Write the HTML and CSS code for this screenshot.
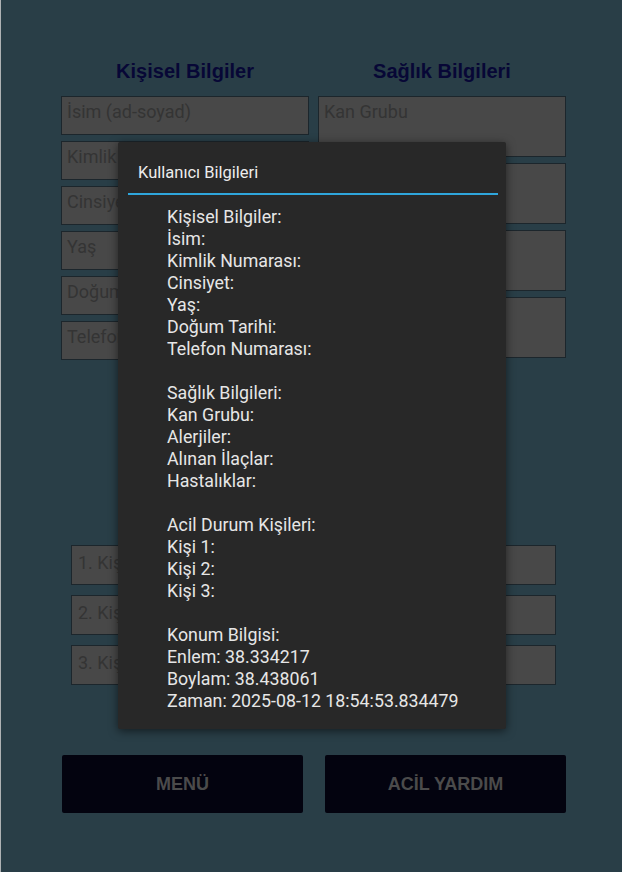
FILE: index.html
```html
<!DOCTYPE html>
<html lang="tr">
<head>
<meta charset="utf-8">
<title>Kullanıcı Bilgileri</title>
<link rel="stylesheet" href="styles.css">
</head>
<body>
<div class="screen">
  <div class="columns">
    <section class="col">
      <h2 class="col-title">Kişisel Bilgiler</h2>
      <div class="field short">İsim (ad-soyad)</div>
      <div class="field short">Kimlik Numarası</div>
      <div class="field short">Cinsiyet</div>
      <div class="field short">Yaş</div>
      <div class="field short">Doğum Tarihi</div>
      <div class="field short">Telefon Numarası</div>
    </section>
    <section class="col">
      <h2 class="col-title">Sağlık Bilgileri</h2>
      <div class="field tall">Kan Grubu</div>
      <div class="field tall">Alerjiler</div>
      <div class="field tall">Alınan İlaçlar</div>
      <div class="field tall">Hastalıklar</div>
    </section>
  </div>

  <div class="contacts">
    <div class="field contact">1. Kişi</div>
    <div class="field contact">2. Kişi</div>
    <div class="field contact">3. Kişi</div>
  </div>

  <div class="actions">
    <button class="btn">MENÜ</button>
    <button class="btn">ACİL YARDIM</button>
  </div>

  <div class="dialog">
    <div class="dialog-title">Kullanıcı Bilgileri</div>
    <div class="dialog-rule"></div>
    <div class="dialog-body">
      <div>Kişisel Bilgiler:</div>
      <div>İsim:</div>
      <div>Kimlik Numarası:</div>
      <div>Cinsiyet:</div>
      <div>Yaş:</div>
      <div>Doğum Tarihi:</div>
      <div>Telefon Numarası:</div>
      <div class="blank"></div>
      <div>Sağlık Bilgileri:</div>
      <div>Kan Grubu:</div>
      <div>Alerjiler:</div>
      <div>Alınan İlaçlar:</div>
      <div>Hastalıklar:</div>
      <div class="blank"></div>
      <div>Acil Durum Kişileri:</div>
      <div>Kişi 1:</div>
      <div>Kişi 2:</div>
      <div>Kişi 3:</div>
      <div class="blank"></div>
      <div>Konum Bilgisi:</div>
      <div>Enlem: 38.334217</div>
      <div>Boylam: 38.438061</div>
      <div>Zaman: 2025-08-12 18:54:53.834479</div>
    </div>
  </div>
</div>
</body>
</html>
```

FILE: styles.css
```css
* { box-sizing: border-box; }

html, body {
  margin: 0;
  padding: 0;
  background: #293e47;
}

body {
  width: 622px;
  height: 872px;
  overflow: hidden;
  border-left: 1px solid #aeb2b4;
}

.screen {
  position: relative;
  width: 621px;
  height: 872px;
  padding-top: 57px;
  font-family: Roboto, "Noto Sans", sans-serif;
}

.columns {
  display: grid;
  grid-template-columns: 248px 248px;
  column-gap: 9px;
  margin-left: 60px;
}

.col {
  display: flex;
  flex-direction: column;
  gap: 6px;
}

.col-title {
  margin: 0 0 5px 0;
  height: 28px;
  line-height: 28px;
  text-align: center;
  font-family: "Liberation Sans", Arial, sans-serif;
  font-weight: bold;
  font-size: 20px;
  color: #070736;
}

.field {
  background: #484848;
  border: 1px solid #1c262c;
  color: #343434;
  font-size: 18px;
  line-height: 21px;
  padding: 4px 5px;
  white-space: nowrap;
  overflow: hidden;
}

.short { height: 39px; }
.tall { height: 61px; }

.contacts {
  display: flex;
  flex-direction: column;
  gap: 10px;
  margin: 185px 0 0 70px;
  width: 485px;
}

.contact {
  height: 40px;
  padding: 6px 6px;
}

.actions {
  display: flex;
  gap: 22px;
  margin: 70px 0 0 61px;
}

.btn {
  width: 241px;
  height: 58px;
  background: #03030f;
  border: none;
  border-radius: 2px;
  color: #4b4b4b;
  font-family: "Liberation Sans", Arial, sans-serif;
  font-weight: bold;
  font-size: 18px;
  padding: 0;
}

.dialog {
  position: absolute;
  left: 117px;
  top: 142px;
  width: 388px;
  height: 587px;
  background: #282828;
  box-shadow: 0 2px 10px rgba(0, 0, 0, 0.55);
  border-radius: 2px;
  color: #e6e6e6;
}

.dialog-title {
  padding: 21px 0 10px 20px;
  font-size: 16.5px;
  line-height: 20px;
  color: #ececec;
}

.dialog-rule {
  height: 2px;
  margin: 0 8px 0 10px;
  background: #2fa6dc;
}

.dialog-body {
  padding: 11px 0 17px 49px;
  font-size: 17.8px;
  line-height: 22px;
}

.blank { height: 22px; }
```
